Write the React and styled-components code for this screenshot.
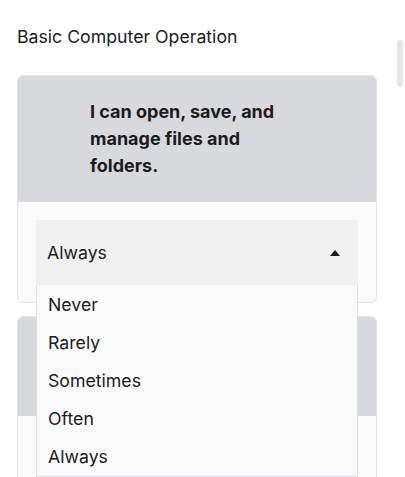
import React, { useState } from "react";
import styled, { createGlobalStyle } from "styled-components";

const GlobalStyle = createGlobalStyle`
  html, body {
    margin: 0;
    padding: 0;
    background: #ffffff;
    overflow: hidden;
  }
  body {
    font-family: Inter, "Liberation Sans", Arial, sans-serif;
    color: #1c1c1e;
  }
`;

const Page = styled.div`
  position: relative;
  padding: 26px 28px 0 17px;
`;

const ScrollThumb = styled.div`
  position: fixed;
  top: 40px;
  right: 2px;
  width: 6px;
  height: 47px;
  border-radius: 3px;
  background: #e4e5e8;
`;

const SectionTitle = styled.h1`
  margin: 0 0 27px;
  font-size: 17.7px;
  line-height: 22px;
  font-weight: 400;
  color: #1c1c1e;
`;

const CardList = styled.div`
  display: flex;
  flex-direction: column;
  gap: 13px;
`;

const Card = styled.section`
  border: 1px solid #e4e5e8;
  border-radius: 6px;
  background: #fafafa;
`;

const CardHeader = styled.div`
  background: #d8d9dc;
  border-radius: 5px 5px 0 0;
  padding: 22px 20px 23px 72px;
`;

const Question = styled.p`
  margin: 0;
  max-width: 200px;
  font-size: 18px;
  line-height: 27px;
  font-weight: 700;
  color: #1c1c1e;
`;

const CardBody = styled.div`
  padding: 18px 18px 17px;
`;

const SelectWrap = styled.div`
  position: relative;
`;

const Trigger = styled.button`
  display: flex;
  align-items: center;
  justify-content: space-between;
  width: 100%;
  height: 65px;
  padding: 0 18px 0 11px;
  border: none;
  background: #f0f0f0;
  font-family: inherit;
  font-size: 17.7px;
  color: #1c1c1e;
  cursor: pointer;
`;

const Caret = styled.span`
  width: 0;
  height: 0;
  border-left: 5.5px solid transparent;
  border-right: 5.5px solid transparent;
  border-bottom: 6px solid #1c1c1e;
  transform: ${(p) => (p.$open ? "none" : "rotate(180deg)")};
`;

const Menu = styled.ul`
  position: absolute;
  top: 100%;
  left: 0;
  right: 0;
  z-index: 5;
  margin: 0;
  padding: 0 0 1px;
  list-style: none;
  background: #fafafa;
  border: 1px solid #dde0e5;
  border-top: none;
`;

const Option = styled.li`
  height: 38px;
  display: flex;
  align-items: center;
  padding-left: 11px;
  font-size: 17.7px;
  color: #1c1c1e;
  cursor: pointer;
`;

const OPTIONS = ["Never", "Rarely", "Sometimes", "Often", "Always"];

const QuestionCard = ({ text, value, open, onToggle, onPick }) => (
  <Card>
    <CardHeader>
      <Question>{text}</Question>
    </CardHeader>
    <CardBody>
      <SelectWrap>
        <Trigger onClick={onToggle}>
          <span>{value}</span>
          <Caret $open={open} />
        </Trigger>
        {open && (
          <Menu>
            {OPTIONS.map((o) => (
              <Option key={o} onClick={() => onPick(o)}>
                {o}
              </Option>
            ))}
          </Menu>
        )}
      </SelectWrap>
    </CardBody>
  </Card>
);

export default function App() {
  const [answers, setAnswers] = useState({ 0: "Always", 1: "Often" });
  const [openIdx, setOpenIdx] = useState(0);

  const questions = [
    "I can open, save, and manage files and folders.",
    "I can use a mouse and keyboard.",
  ];

  return (
    <Page>
      <GlobalStyle />
      <SectionTitle>Basic Computer Operation</SectionTitle>
      <CardList>
        {questions.map((q, i) => (
          <QuestionCard
            key={i}
            text={q}
            value={answers[i]}
            open={openIdx === i}
            onToggle={() => setOpenIdx(openIdx === i ? -1 : i)}
            onPick={(v) => {
              setAnswers({ ...answers, [i]: v });
              setOpenIdx(-1);
            }}
          />
        ))}
      </CardList>
      <ScrollThumb />
    </Page>
  );
}
